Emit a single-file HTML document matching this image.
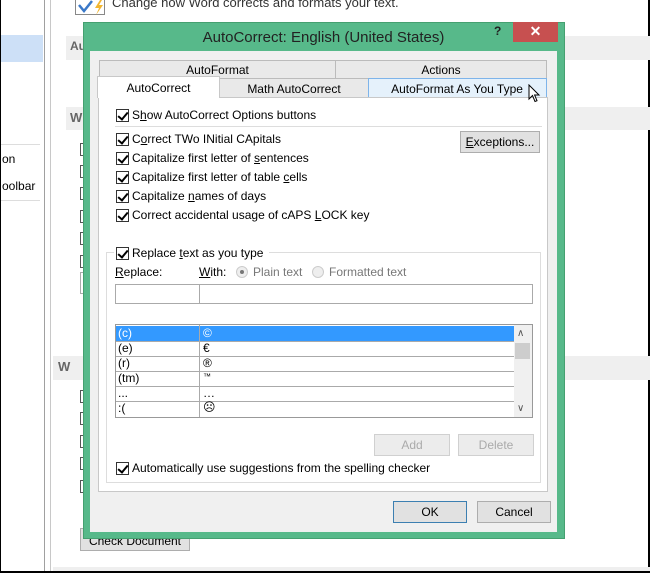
<!DOCTYPE html>
<html><head><style>
*{margin:0;padding:0;box-sizing:border-box}
body{width:650px;height:573px;overflow:hidden;background:#fff;position:relative;font-family:"Liberation Sans",sans-serif;font-size:12px;color:#000}
.a{position:absolute}
.t{position:absolute;white-space:nowrap;font-size:12px;line-height:13px}
.cb{position:absolute;width:13px;height:13px;border:1px solid #333;background:#fff}
.cb::after{content:"";position:absolute;left:3px;top:0px;width:4px;height:8px;border:solid #000;border-width:0 2px 2px 0;transform:rotate(40deg)}
.sb{position:absolute;width:6px;height:13px;border:1px solid #555;border-right:none;background:#fff}
.btn{position:absolute;border:1px solid #adadad;background:#e1e1e1;text-align:center;font-size:12px;line-height:20px}
u{text-decoration:underline}
</style></head><body>
<div class="a" style="left:0;top:0;width:1px;height:573px;background:#000"></div>
<div class="a" style="right:0;top:0;width:2px;height:573px;background:#000"></div>
<div class="a" style="left:0;top:571px;width:650px;height:2px;background:#000"></div>
<div class="a" style="left:1px;top:35px;width:42px;height:27px;background:#cde0f7"></div>
<div class="a" style="left:44px;top:0;width:1px;height:571px;background:#a0a0a0"></div>
<div class="a" style="left:50px;top:0;width:1px;height:571px;background:#c8c8c8"></div>
<div class="a" style="left:1px;top:144px;width:39px;height:1px;background:#ddd"></div>
<div class="a" style="left:1px;top:200px;width:39px;height:1px;background:#ddd"></div>
<div class="t" style="left:2px;top:153px">on</div>
<div class="t" style="left:2px;top:180px">oolbar</div>
<div class="a" style="left:75px;top:0;width:30px;height:15px;border:1px solid #888;border-top:none"></div>
<svg class="a" style="left:76px;top:0" width="30" height="15"><path d="M3 5 L8 11 L16 1" fill="none" stroke="#3a78c8" stroke-width="2.5"/><path d="M24 0 L19 8 L23 8 L20 15 L27 5 L23 5 L26 0 Z" fill="#f2b630"/></svg>
<div class="t" style="left:112px;top:-4px;font-size:13px;color:#333">Change how Word corrects and formats your text.</div>
<div class="a" style="left:66px;top:36px;width:584px;height:24px;background:#efefef"></div>
<div class="a" style="left:66px;top:107px;width:584px;height:23px;background:#efefef"></div>
<div class="a" style="left:53px;top:356px;width:597px;height:24px;background:#efefef"></div>
<div class="t" style="left:70px;top:40px;font-weight:bold;color:#666">Au</div>
<div class="t" style="left:70px;top:111px;font-weight:bold;color:#666;font-size:13px">W</div>
<div class="t" style="left:58px;top:360px;font-weight:bold;color:#666;font-size:13px">W</div>
<div class="sb" style="left:80px;top:143px"></div><div class="sb" style="left:80px;top:165px"></div><div class="sb" style="left:80px;top:187px"></div><div class="sb" style="left:80px;top:210px"></div><div class="sb" style="left:80px;top:232px"></div><div class="sb" style="left:80px;top:255px"></div>
<div class="sb" style="left:80px;top:390px"></div><div class="sb" style="left:80px;top:412px"></div><div class="sb" style="left:80px;top:435px"></div><div class="sb" style="left:80px;top:457px"></div><div class="sb" style="left:80px;top:480px"></div>
<div class="a" style="left:80px;top:272px;width:6px;height:22px;border:1px solid #aaa;border-right:none"></div>
<div class="btn" style="left:80px;top:528px;width:110px;height:23px;line-height:24px">Check Document</div>
<div class="a" style="left:53px;top:567px;width:597px;height:4px;background:#efefef"></div>
<!-- dialog -->
<div class="a" style="left:83px;top:22px;width:482px;height:517px;background:#57b98a;border:1px solid #45a070"></div>
<div class="t" style="left:90px;top:29px;width:467px;text-align:center;font-size:15px;line-height:18px;color:#222">AutoCorrect: English (United States)</div>
<div class="t" style="left:494px;top:25px;font-weight:bold;font-size:12px;color:#222">?</div>
<div class="a" style="left:513px;top:22px;width:45px;height:20px;background:#c75050;color:#fff;text-align:center;font-size:14px;line-height:19px;font-weight:bold">✕</div>
<div class="a" style="left:90px;top:51px;width:467px;height:481px;background:#f0f0f0"></div>
<div class="a" style="left:99px;top:60px;width:237px;height:19px;background:#e9e9e9;border:1px solid #bbb"></div>
<div class="a" style="left:335px;top:60px;width:212px;height:19px;background:#e9e9e9;border:1px solid #bbb"></div>
<div class="t" style="left:99px;top:64px;width:237px;text-align:center">AutoFormat</div>
<div class="t" style="left:335px;top:64px;width:212px;text-align:center">Actions</div>
<div class="a" style="left:219px;top:78px;width:150px;height:20px;background:#e9e9e9;border:1px solid #bbb"></div>
<div class="t" style="left:219px;top:83px;width:150px;text-align:center">Math AutoCorrect</div>
<div class="a" style="left:368px;top:78px;width:179px;height:20px;background:#e5f1fb;border:1px solid #7eb4ea"></div>
<div class="t" style="left:368px;top:83px;width:178px;text-align:center">AutoFormat As You Type</div>
<div class="a" style="left:98px;top:97px;width:450px;height:395px;background:#fff;border:1px solid #c8c8c8"></div>
<div class="a" style="left:97px;top:76px;width:123px;height:22px;background:#fff;border:1px solid #c8c8c8;border-bottom:none"></div>
<div class="t" style="left:97px;top:82px;width:123px;text-align:center">AutoCorrect</div>
<svg class="a" style="left:528px;top:84px" width="14" height="20" viewBox="0 0 14 20"><path d="M1 1 L1 15 L4.5 11.5 L7 17.5 L9 16.7 L6.6 11 L11 11 Z" fill="#fff" stroke="#000" stroke-width="1"/></svg>
<div class="cb" style="left:116px;top:109px"></div><div class="t" style="left:132px;top:109px">S<u>h</u>ow AutoCorrect Options buttons</div>
<div class="a" style="left:115px;top:126px;width:427px;height:1px;background:#ddd"></div>
<div class="cb" style="left:116px;top:133px"></div><div class="t" style="left:132px;top:133px">C<u>o</u>rrect TWo INitial CApitals</div>
<div class="cb" style="left:116px;top:152px"></div><div class="t" style="left:132px;top:152px">Capitalize first letter of <u>s</u>entences</div>
<div class="cb" style="left:116px;top:171px"></div><div class="t" style="left:132px;top:171px">Capitalize first letter of table <u>c</u>ells</div>
<div class="cb" style="left:116px;top:190px"></div><div class="t" style="left:132px;top:190px">Capitalize <u>n</u>ames of days</div>
<div class="cb" style="left:116px;top:209px"></div><div class="t" style="left:132px;top:209px">Correct accidental usage of cAPS <u>L</u>OCK key</div>
<div class="btn" style="left:460px;top:131px;width:80px;height:22px"><u>E</u>xceptions...</div>
<div class="a" style="left:106px;top:252px;width:435px;height:231px;border:1px solid #ddd"></div>
<div class="a" style="left:114px;top:247px;width:155px;height:12px;background:#fff"></div>
<div class="cb" style="left:116px;top:247px"></div><div class="t" style="left:132px;top:247px">Replace <u>t</u>ext as you type</div>
<div class="t" style="left:115px;top:266px"><u>R</u>eplace:</div>
<div class="t" style="left:199px;top:266px"><u>W</u>ith:</div>
<div class="a" style="left:236px;top:266px;width:12px;height:12px;border-radius:50%;border:1px solid #ccc;background:#eee"><div class="a" style="left:3px;top:3px;width:4px;height:4px;border-radius:50%;background:#777"></div></div>
<div class="t" style="left:253px;top:266px;color:#777">Plain text</div>
<div class="a" style="left:312px;top:266px;width:12px;height:12px;border-radius:50%;border:1px solid #ccc;background:#eee"></div>
<div class="t" style="left:329px;top:266px;color:#777">Formatted text</div>
<div class="a" style="left:115px;top:284px;width:85px;height:20px;border:1px solid #aaa"></div>
<div class="a" style="left:199px;top:284px;width:334px;height:20px;border:1px solid #aaa"></div>
<div class="a" style="left:115px;top:324px;width:418px;height:94px;border:1px solid #999;background:#fff"></div>
<div class="a" style="left:116px;top:326px;width:398px;height:15px;background:#3399ff"></div>
<div class="a" style="left:199px;top:325px;width:1px;height:92px;background:#aaa"></div>
<div class="a" style="left:116px;top:341px;width:398px;height:1px;background:#aaa"></div>
<div class="a" style="left:116px;top:356px;width:398px;height:1px;background:#aaa"></div>
<div class="a" style="left:116px;top:371px;width:398px;height:1px;background:#aaa"></div>
<div class="a" style="left:116px;top:386px;width:398px;height:1px;background:#aaa"></div>
<div class="a" style="left:116px;top:401px;width:398px;height:1px;background:#aaa"></div>
<div class="t" style="left:118px;top:327px;color:#fff">(c)</div><div class="t" style="left:203px;top:327px;color:#fff">©</div>
<div class="t" style="left:118px;top:342px">(e)</div><div class="t" style="left:203px;top:342px">€</div>
<div class="t" style="left:118px;top:357px">(r)</div><div class="t" style="left:203px;top:357px">®</div>
<div class="t" style="left:118px;top:372px">(tm)</div><div class="t" style="left:203px;top:370px;font-size:8px">™</div>
<div class="t" style="left:118px;top:387px">...</div><div class="t" style="left:203px;top:387px">…</div>
<div class="t" style="left:118px;top:402px">:(</div><div class="t" style="left:203px;top:401px">☹</div>
<div class="a" style="left:514px;top:325px;width:18px;height:92px;background:#f0f0f0"></div>
<div class="a" style="left:515px;top:343px;width:15px;height:16px;background:#cdcdcd"></div>
<div class="t" style="left:517px;top:327px;font-size:10px;color:#555">&#x2227;</div>
<div class="t" style="left:517px;top:402px;font-size:10px;color:#555">&#x2228;</div>
<div class="btn" style="left:374px;top:434px;width:76px;height:22px;color:#aaa;background:#ececec;border-color:#d0d0d0">Add</div>
<div class="btn" style="left:458px;top:434px;width:76px;height:22px;color:#aaa;background:#ececec;border-color:#d0d0d0">Delete</div>
<div class="cb" style="left:116px;top:462px"></div><div class="t" style="left:132px;top:462px">Automatically use sug<u>g</u>estions from the spelling checker</div>
<div class="btn" style="left:393px;top:501px;width:74px;height:22px;border-color:#3c7fb1">OK</div>
<div class="btn" style="left:477px;top:501px;width:74px;height:22px">Cancel</div>
</body></html>
